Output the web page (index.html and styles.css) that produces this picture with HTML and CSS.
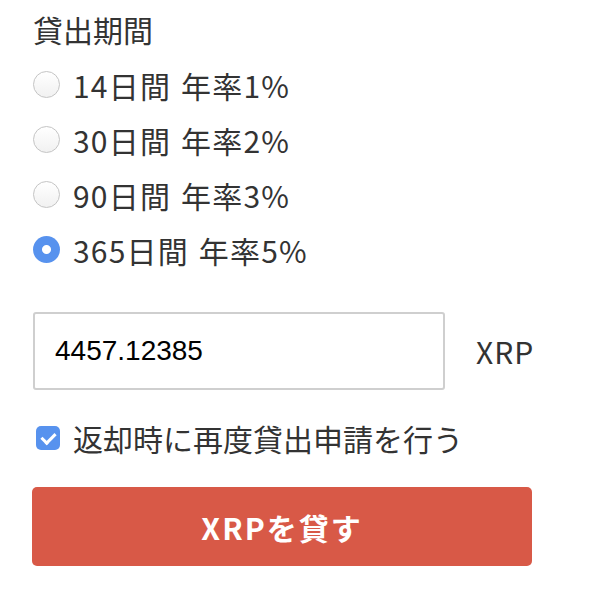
FILE: index.html
```html
<!DOCTYPE html>
<html>
<head><meta charset="UTF-8">
<title>貸出</title>
<link rel="stylesheet" href="styles.css">
</head>
<body>
<form class="lend">
    <div class="label">貸出期間</div>
    <label class="row"><input type="radio" name="term"><span>14日間 年率1%</span></label>
    <label class="row"><input type="radio" name="term"><span>30日間 年率2%</span></label>
    <label class="row"><input type="radio" name="term"><span>90日間 年率3%</span></label>
    <label class="row"><input type="radio" name="term" checked><span>365日間 年率5%</span></label>
    <div class="amount">
        <input type="text" class="amount-input" value="4457.12385">
        <span class="unit">XRP</span>
    </div>
    <label class="row check"><input type="checkbox" checked><span>返却時に再度貸出申請を行う</span></label>
    <button type="button" class="submit">XRPを貸す</button>
</form>
</body>
</html>
```
FILE: styles.css
```css
html, body {
    margin: 0;
    background: #fff;
}
body {
    font-family: "Noto Sans CJK JP", sans-serif;
    color: #333;
    font-size: 30px;
}
.lend {
    padding: 2px 0 0 33px;
    width: 540px;
}
.label {
    line-height: 55px;
    height: 55px;
}
.row {
    display: flex;
    align-items: center;
    height: 55px;
    line-height: 40px;
}
.row span {
    margin-left: 13px;
    letter-spacing: 1.2px;
    word-spacing: 2px;
}
.row input[type=radio] {
    -webkit-appearance: none;
    appearance: none;
    margin: 0;
    width: 27px;
    height: 27px;
    border-radius: 50%;
    border: 1px solid #c4c4c4;
    background: linear-gradient(#fff, #f1f1f1);
    box-sizing: border-box;
}
.row input[type=radio]:checked {
    border: none;
    background: radial-gradient(circle, #fff 0 4px, #5792ee 5px);
}
.amount {
    display: flex;
    align-items: center;
    margin-top: 35px;
}
.amount-input {
    flex: none;
    width: 412px;
    height: 78px;
    box-sizing: border-box;
    border: 2px solid #cfcfcf;
    border-radius: 3px;
    padding: 0 20px;
    font: 28px "Liberation Sans", sans-serif;
    color: #000;
    outline: none;
}
.unit {
    margin-left: 31px;
    letter-spacing: 1px;
}
.check {
    margin-top: 20px;
}
.check input[type=checkbox] {
    -webkit-appearance: none;
    appearance: none;
    margin: 0 0 0 3px;
    width: 24px;
    height: 24px;
    border-radius: 5px;
    background: #5792ee;
    position: relative;
}
.check input[type=checkbox]::after {
    content: "";
    position: absolute;
    left: 8px;
    top: 4px;
    width: 6px;
    height: 11px;
    border: solid #fff;
    border-width: 0 3px 3px 0;
    transform: rotate(45deg);
}
.check span {
    margin-left: 13px;
    letter-spacing: 0;
}
.submit {
    display: block;
    margin: 22px 0 0 -1px;
    width: 500px;
    height: 79px;
    border: none;
    border-radius: 5px;
    background: #d85947;
    color: #fff;
    font: bold 30px "Noto Sans CJK JP", sans-serif;
    letter-spacing: 2px;
}
```
